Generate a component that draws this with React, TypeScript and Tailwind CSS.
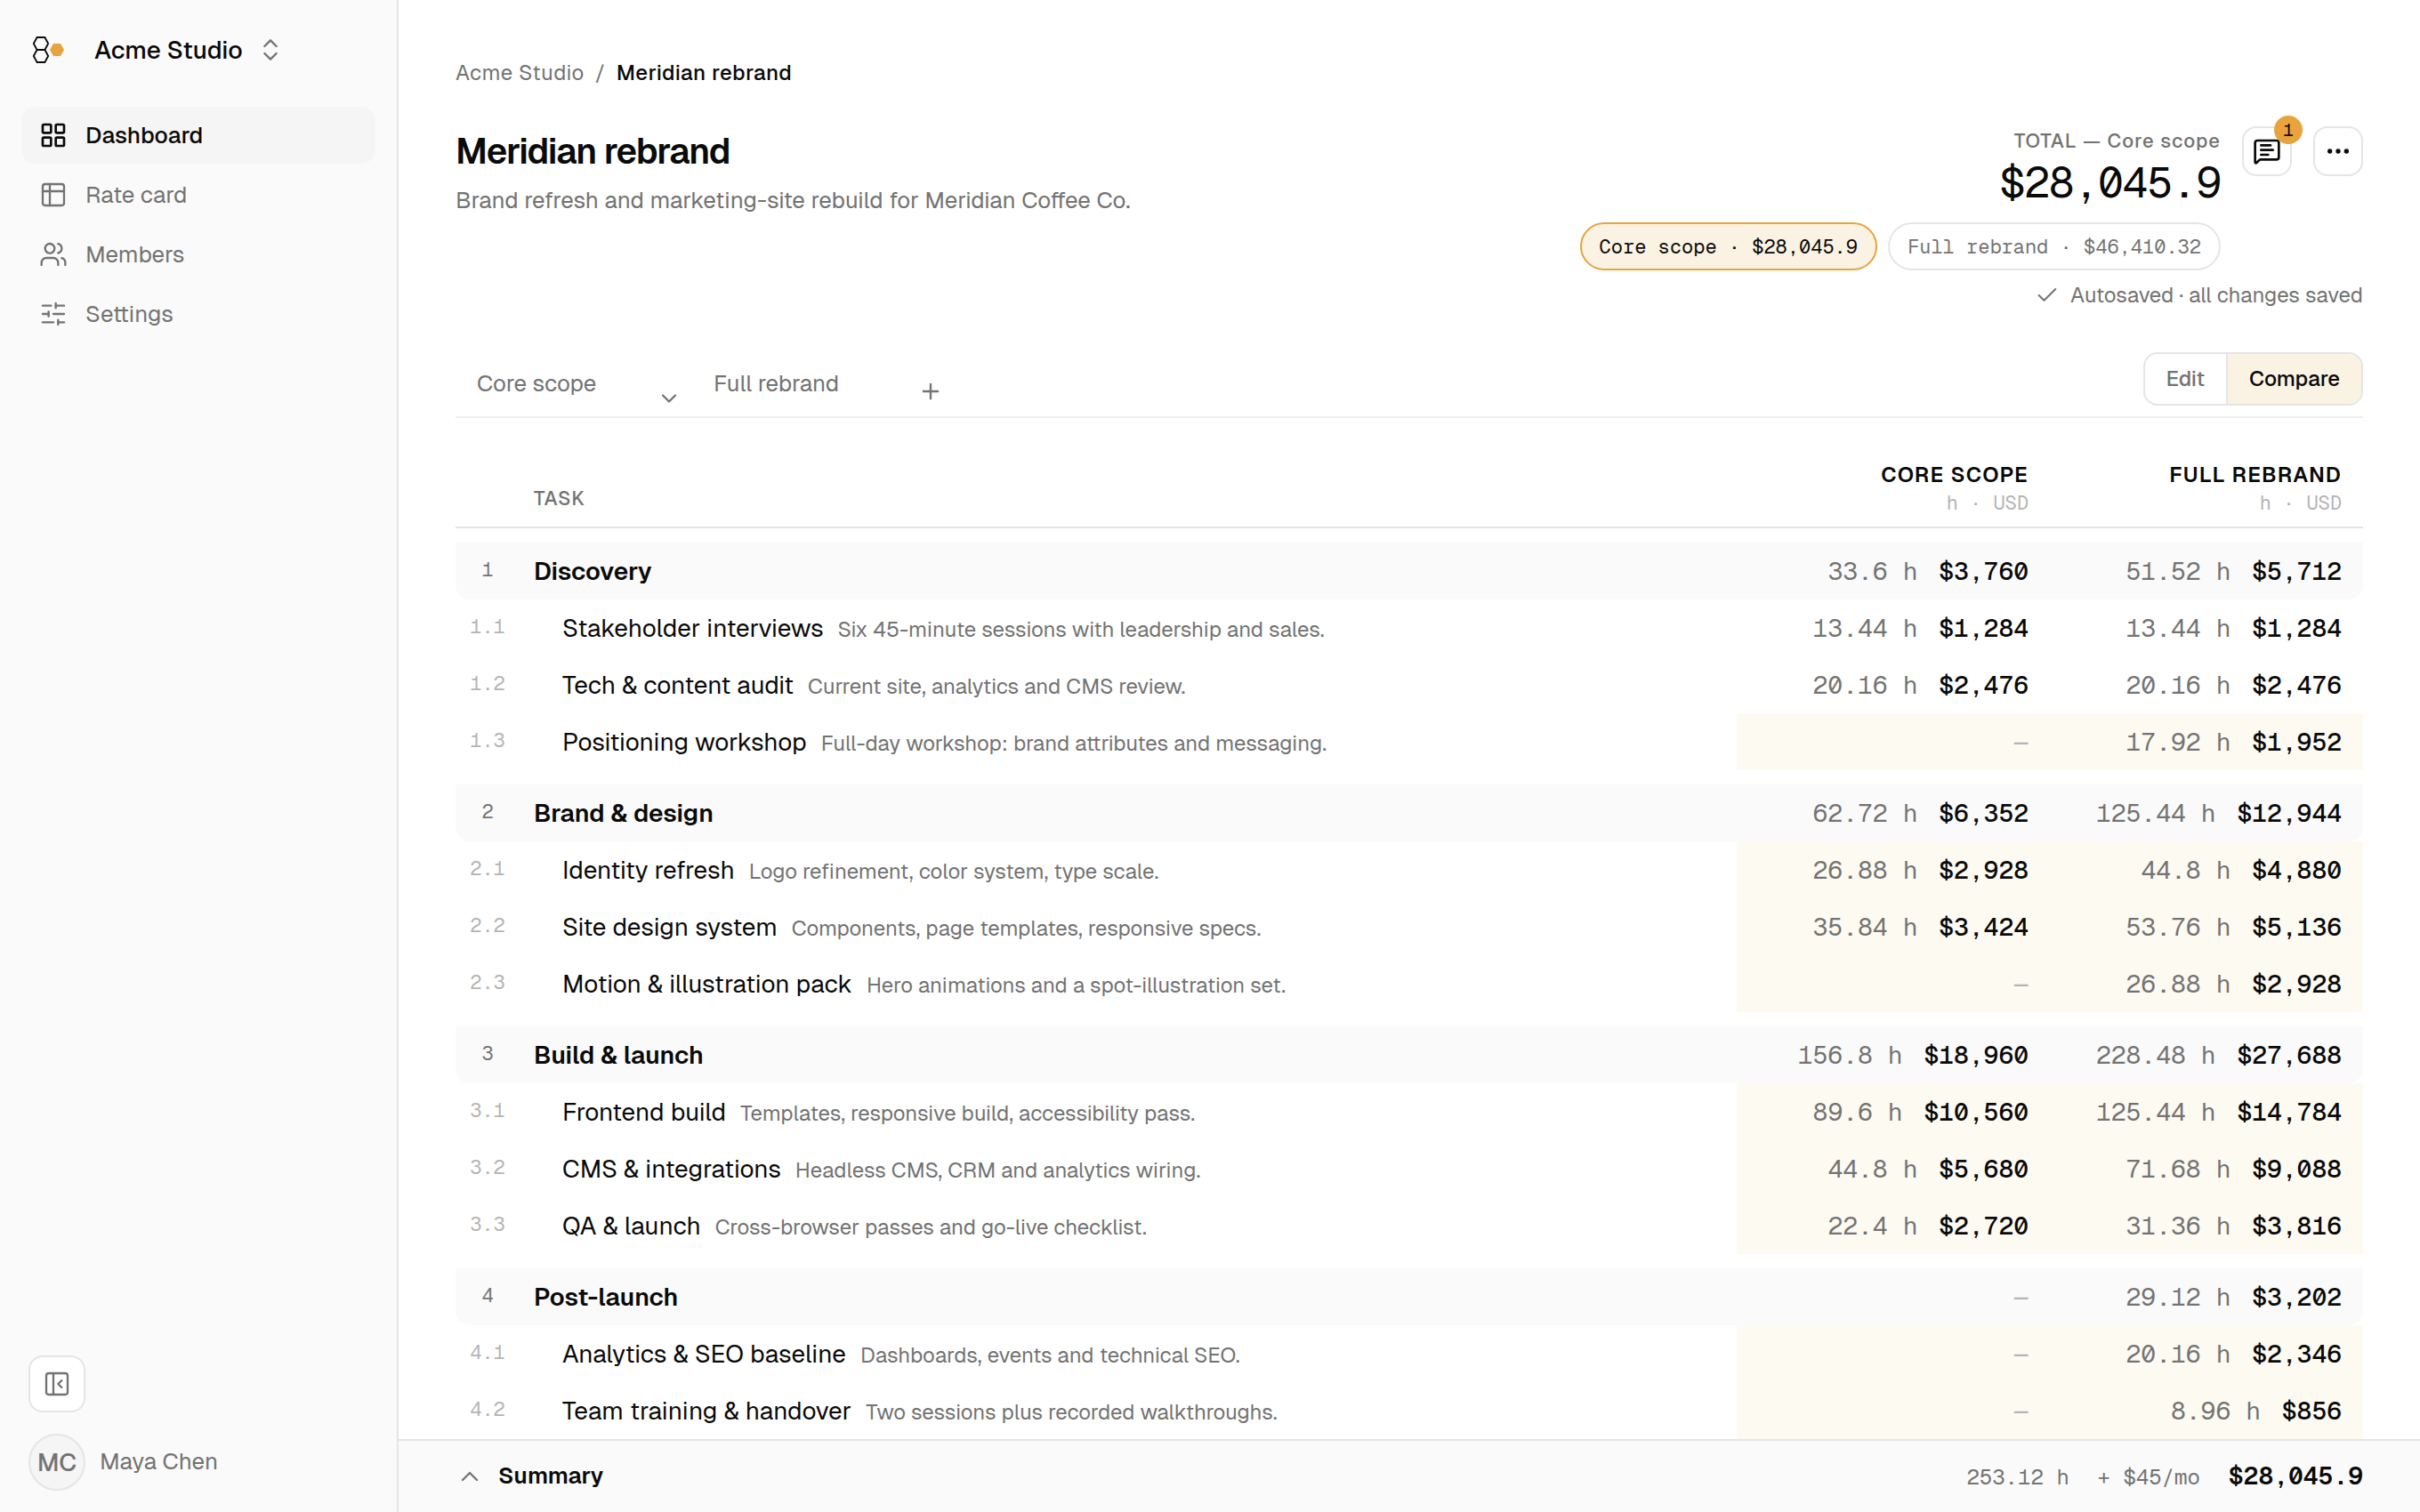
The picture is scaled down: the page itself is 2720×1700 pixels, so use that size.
import {
  Check,
  ChevronDown,
  ChevronsUpDown,
  ChevronUp,
  Ellipsis,
  LayoutGrid,
  MessageSquareText,
  PanelLeftClose,
  Plus,
  SlidersHorizontal,
  Users,
} from 'lucide-react';

const NAV_ITEMS = [
  { label: 'Dashboard', icon: LayoutGrid, active: true },
  { label: 'Rate card', icon: RateCardIcon },
  { label: 'Members', icon: Users },
  { label: 'Settings', icon: SlidersHorizontal },
];

type Cell = [hours: string, price: string] | null;

const SECTIONS: {
  name: string;
  core: Cell;
  full: Cell;
  tasks: { name: string; note: string; core: Cell; full: Cell; diff?: boolean }[];
}[] = [
  {
    name: 'Discovery',
    core: ['33.6', '$3,760'],
    full: ['51.52', '$5,712'],
    tasks: [
      { name: 'Stakeholder interviews', note: 'Six 45-minute sessions with leadership and sales.', core: ['13.44', '$1,284'], full: ['13.44', '$1,284'] },
      { name: 'Tech & content audit', note: 'Current site, analytics and CMS review.', core: ['20.16', '$2,476'], full: ['20.16', '$2,476'] },
      { name: 'Positioning workshop', note: 'Full-day workshop: brand attributes and messaging.', core: null, full: ['17.92', '$1,952'], diff: true },
    ],
  },
  {
    name: 'Brand & design',
    core: ['62.72', '$6,352'],
    full: ['125.44', '$12,944'],
    tasks: [
      { name: 'Identity refresh', note: 'Logo refinement, color system, type scale.', core: ['26.88', '$2,928'], full: ['44.8', '$4,880'], diff: true },
      { name: 'Site design system', note: 'Components, page templates, responsive specs.', core: ['35.84', '$3,424'], full: ['53.76', '$5,136'], diff: true },
      { name: 'Motion & illustration pack', note: 'Hero animations and a spot-illustration set.', core: null, full: ['26.88', '$2,928'], diff: true },
    ],
  },
  {
    name: 'Build & launch',
    core: ['156.8', '$18,960'],
    full: ['228.48', '$27,688'],
    tasks: [
      { name: 'Frontend build', note: 'Templates, responsive build, accessibility pass.', core: ['89.6', '$10,560'], full: ['125.44', '$14,784'], diff: true },
      { name: 'CMS & integrations', note: 'Headless CMS, CRM and analytics wiring.', core: ['44.8', '$5,680'], full: ['71.68', '$9,088'], diff: true },
      { name: 'QA & launch', note: 'Cross-browser passes and go-live checklist.', core: ['22.4', '$2,720'], full: ['31.36', '$3,816'], diff: true },
    ],
  },
  {
    name: 'Post-launch',
    core: null,
    full: ['29.12', '$3,202'],
    tasks: [
      { name: 'Analytics & SEO baseline', note: 'Dashboards, events and technical SEO.', core: null, full: ['20.16', '$2,346'], diff: true },
      { name: 'Team training & handover', note: 'Two sessions plus recorded walkthroughs.', core: null, full: ['8.96', '$856'], diff: true },
    ],
  },
];

function RateCardIcon({ className }: { className?: string }) {
  return (
    <svg viewBox="0 0 24 24" fill="none" stroke="currentColor" strokeWidth={1.75} strokeLinecap="round" strokeLinejoin="round" className={className}>
      <rect x="3" y="3" width="18" height="18" rx="2" />
      <path d="M3 9h18M9 3v18" />
    </svg>
  );
}

function Logo() {
  return (
    <svg width="38" height="32" viewBox="0 0 38 32" fill="none" className="block">
      <path d="M2.8 9 6.6 2h8.8l3.8 7-3.8 7H6.6zM2.8 23l3.8-7h8.8l3.8 7-3.8 7H6.6z" stroke="#0a0a0a" strokeWidth="1.8" />
      <path d="m21 16 4-7h8l4 7-4 7h-8z" fill="#e8a33d" />
    </svg>
  );
}

function Amount({ cell }: { cell: Cell }) {
  if (!cell) {
    return <div className="pr-6 text-right font-['Geist_Mono','Liberation_Mono',monospace] text-[28px] leading-[64px] text-[#b4b4b4]">—</div>;
  }
  return (
    <div className="flex justify-end gap-6 pr-6 font-['Geist_Mono','Liberation_Mono',monospace] text-[28px] leading-[64px]">
      <span className="text-[#737373]">{cell[0]} h</span>
      <span className="font-medium">{cell[1]}</span>
    </div>
  );
}

function Sidebar() {
  return (
    <aside className="flex w-[448px] shrink-0 flex-col border-r-2 border-[#e5e5e5] bg-[#fafafa]">
      <div className="flex h-[112px] items-center pl-[35px]">
        <Logo />
        <span className="ml-[33px] text-[28px] font-medium">Acme Studio</span>
        <ChevronsUpDown size={32} strokeWidth={1.75} className="ml-[15px] text-[#737373]" />
      </div>
      <nav className="mt-2 flex flex-col gap-[3px] px-6">
        {NAV_ITEMS.map(({ label, icon: Icon, active }) => (
          <a
            key={label}
            className={
              active
                ? 'flex h-16 items-center gap-5 rounded-2xl bg-[#f5f5f5] px-5 text-[26px] leading-[38px] font-medium'
                : 'flex h-16 items-center gap-5 rounded-2xl px-5 text-[26px] text-[#737373]'
            }
          >
            <Icon className="size-8" strokeWidth={active ? 2 : 1.75} />
            {label}
          </a>
        ))}
      </nav>
      <div className="mt-auto flex flex-col gap-6 px-8 pb-6">
        <button className="flex size-16 items-center justify-center rounded-2xl border-2 border-[#e5e5e5] bg-white text-[#737373]">
          <PanelLeftClose size={32} strokeWidth={1.75} />
        </button>
        <div className="flex items-center gap-4">
          <span className="flex size-16 items-center justify-center rounded-full border-2 border-[#e5e5e5] bg-[#f5f5f5] text-[28px] font-medium text-[#737373]">MC</span>
          <span className="pb-[2px] text-[26px] text-[#737373]">Maya Chen</span>
        </div>
      </div>
    </aside>
  );
}

function Header() {
  return (
    <header>
      <div className="flex gap-3 pt-16 text-[24px] leading-9 tracking-[0.02em]">
        <span className="text-[#737373]">Acme Studio</span>
        <span className="text-[#737373]">/</span>
        <span className="font-medium">Meridian rebrand</span>
      </div>
      <div className="mt-[42px] flex justify-between">
        <div>
          <h1 className="text-[40px] leading-[56px] font-semibold tracking-[-0.025em]">Meridian rebrand</h1>
          <p className="mt-[7px] text-[26px] leading-10 text-[#737373]">Brand refresh and marketing-site rebuild for Meridian Coffee Co.</p>
        </div>
        <div className="flex flex-col items-end">
          <div className="flex gap-6">
            <div className="flex flex-col items-end">
              <span className="text-[22px] leading-8 font-medium tracking-[0.05em] text-[#737373]">TOTAL — Core scope</span>
              <span className="font-['Geist_Mono','Liberation_Mono',monospace] text-[48px] leading-[62px] tracking-[-0.025em]">$28,045.9</span>
              <div className="mt-[14px] flex gap-3 font-['Geist_Mono','Liberation_Mono',monospace] text-[22px]">
                <span className="flex h-[54px] items-center rounded-full border-2 border-[#e8a33d] bg-[#faf3e3] px-5">Core scope · $28,045.9</span>
                <span className="flex h-[54px] items-center rounded-full border-2 border-[#e5e5e5] px-5 text-[#737373]">Full rebrand · $46,410.32</span>
              </div>
            </div>
            <button className="relative flex size-14 items-center justify-center rounded-2xl border-2 border-[#e5e5e5]">
              <MessageSquareText size={32} strokeWidth={2} />
              <span className="absolute -top-[14px] -right-[14px] flex size-8 items-center justify-center rounded-full bg-[#e8a33d] font-['Geist_Mono','Liberation_Mono',monospace] text-[20px]">1</span>
            </button>
            <button className="flex size-14 items-center justify-center rounded-2xl border-2 border-[#e5e5e5]">
              <Ellipsis size={32} strokeWidth={2} />
            </button>
          </div>
          <p className="mt-2 flex items-center gap-3 text-[24px] leading-[39px] text-[#737373]">
            <Check size={28} strokeWidth={1.75} />
            Autosaved · all changes saved
          </p>
        </div>
      </div>
    </header>
  );
}

function ScopeTabs() {
  return (
    <div className="mt-[45px] flex h-[74px] items-start border-b-2 border-[#eeeeee] text-[26px] text-[#737373]">
      <span className="w-[226px] pl-6 leading-[70px]">Core scope</span>
      <ChevronDown size={28} strokeWidth={2} className="mt-[38px]" />
      <span className="ml-9 w-[230px] leading-[70px]">Full rebrand</span>
      <Plus size={28} strokeWidth={2} className="mt-[30px]" />
      <div className="ml-auto flex h-[60px] overflow-hidden rounded-2xl border-2 border-[#e5e5e5] text-[24px] leading-[56px] font-medium">
        <span className="px-6">Edit</span>
        <span className="border-l-2 border-[#e5e5e5] bg-[#faf3e3] px-6 text-[#0a0a0a]">Compare</span>
      </div>
    </div>
  );
}

function ScopeHeading({ label }: { label: string }) {
  return (
    <div className="pt-12 pr-6 text-right leading-8">
      <p className="text-[24px] font-semibold tracking-[0.05em]">{label}</p>
      <p className="font-['Geist_Mono','Liberation_Mono',monospace] text-[22px] leading-[30px] text-[#b4b4b4]">h · USD</p>
    </div>
  );
}

function CompareTable() {
  return (
    <div>
      <div className="grid h-[124px] grid-cols-[72px_1fr_352px_352px] border-b-2 border-[#e5e5e5]">
        <p className="col-start-2 pt-[74px] pl-4 text-[22px] leading-8 font-medium tracking-[0.05em] text-[#737373]">TASK</p>
        <ScopeHeading label="CORE SCOPE" />
        <ScopeHeading label="FULL REBRAND" />
      </div>
      {SECTIONS.map((section, i) => (
        <section key={section.name} className="mt-4">
          <div className="grid h-16 grid-cols-[72px_1fr_352px_352px] rounded-b-2xl bg-[#fafafa] leading-[64px]">
            <span className="text-center font-['Geist_Mono','Liberation_Mono',monospace] text-[22px] leading-[60px] text-[#737373]">{i + 1}</span>
            <span className="pl-4 text-[28px] font-semibold">{section.name}</span>
            <Amount cell={section.core} />
            <Amount cell={section.full} />
          </div>
          {section.tasks.map((task, j) => (
            <div key={task.name} className="grid h-16 grid-cols-[72px_1fr_704px] leading-[64px]">
              <span className="text-center font-['Geist_Mono','Liberation_Mono',monospace] text-[22px] leading-[60px] text-[#b4b4b4]">
                {i + 1}.{j + 1}
              </span>
              <p className="flex items-baseline gap-4 pl-12 text-[28px]">
                {task.name}
                <span className="text-[24px] leading-none text-[#737373]">{task.note}</span>
              </p>
              {/* Rows where the two scopes differ get a tint */}
              <div className={task.diff ? 'grid grid-cols-2 bg-[#fdfaf2]' : 'grid grid-cols-2'}>
                <Amount cell={task.core} />
                <Amount cell={task.full} />
              </div>
            </div>
          ))}
        </section>
      ))}
    </div>
  );
}

function SummaryBar() {
  return (
    <footer className="flex h-[82px] shrink-0 items-center border-t-2 border-[#e5e5e5] bg-[#fafafa] px-16">
      <ChevronUp size={32} strokeWidth={1.75} className="text-[#737373]" />
      <span className="ml-4 pb-[2px] text-[26px] font-semibold">Summary</span>
      <div className="ml-auto flex items-baseline gap-8 pb-[2px] font-['Geist_Mono','Liberation_Mono',monospace] text-[24px] text-[#737373]">
        <span>253.12 h</span>
        <span>+ $45/mo</span>
        <span className="text-[28px] font-semibold text-[#0a0a0a]">$28,045.9</span>
      </div>
    </footer>
  );
}

export default function App() {
  return (
    <div className="flex h-screen overflow-hidden bg-white font-['Geist','Inter',sans-serif] text-[#0a0a0a]">
      <Sidebar />
      <div className="flex min-w-0 flex-1 flex-col">
        <main className="min-h-0 flex-1 overflow-hidden px-16">
          <Header />
          <ScopeTabs />
          <CompareTable />
        </main>
        <SummaryBar />
      </div>
    </div>
  );
}
